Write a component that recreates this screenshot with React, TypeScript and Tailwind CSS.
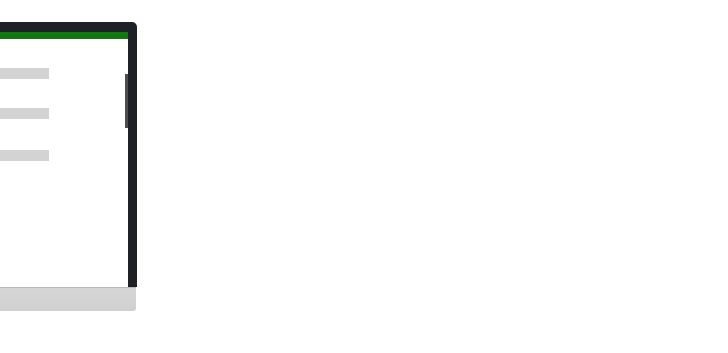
const App = () => {
  const rows = ["mt-[29px]", "mt-[29px]", "mt-[31px]"];

  return (
    <div className="w-[728px] h-[353px] bg-white overflow-hidden pt-[22px]">
      <div className="ml-[-200px] w-[337px]">
        {/* bezel */}
        <div className="bg-[#1e2226] rounded-tr-[5px] pt-[10px] pr-[9px] pl-[9px]">
          <div className="relative bg-white h-[255px]">
            <div className="h-[7px] bg-[#13770f]" />
            <div className="flex flex-col">
              {rows.map((m, i) => (
                <div key={i} className={`${m} ml-[150px] w-[90px] h-[11px] bg-[#d3d3d3]`} />
              ))}
            </div>
            <div className="absolute right-0 top-[42px] w-[3px] h-[54px] bg-[#4e4e4e]" />
          </div>
        </div>
        {/* chin */}
        <div className="h-[24px] mr-[1px] rounded-b-[3px] bg-gradient-to-b from-[#d6d6d6] to-[#d0d0d0] border-t border-[#b8b8b8]" />
      </div>
    </div>
  );
};

export default App;
